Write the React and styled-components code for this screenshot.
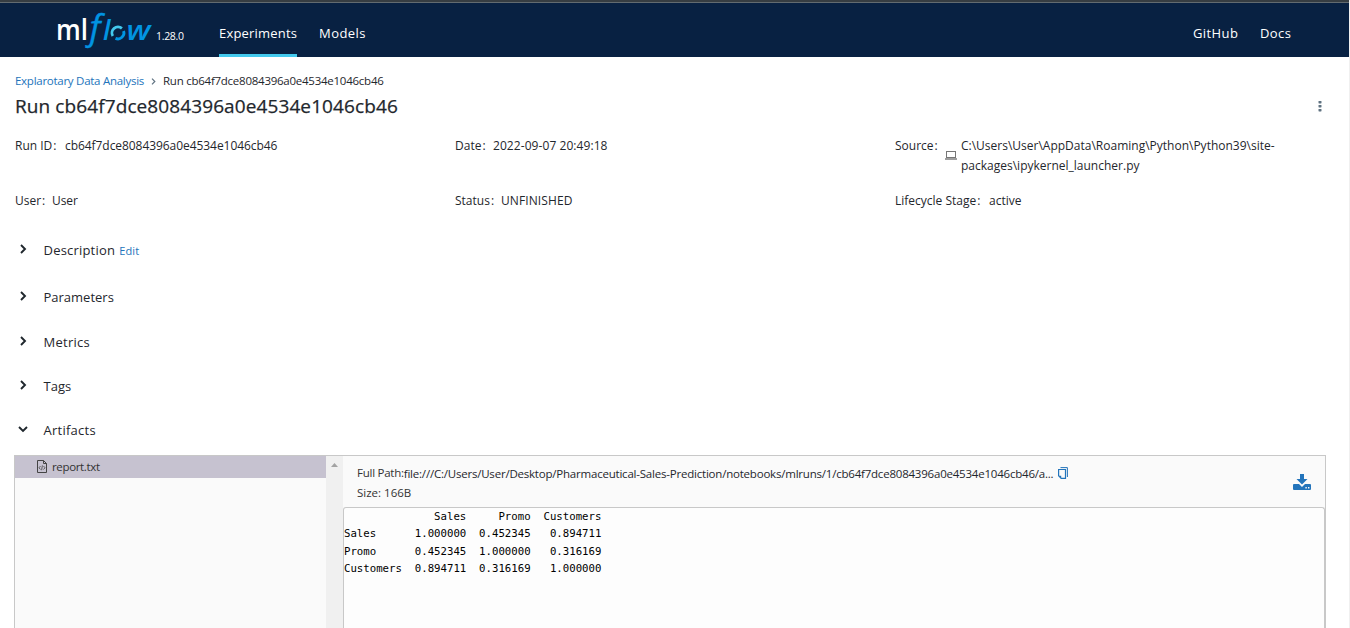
import React from 'react';
import styled, { createGlobalStyle } from 'styled-components';

const Global = createGlobalStyle`
  *{box-sizing:border-box}
  html,body{margin:0;padding:0;background:#fff;overflow:hidden}
  body{font-family:"Open Sans","Noto Sans",sans-serif;font-size:12px;color:#1f272d}
`;

const Page = styled.div`
  height: 628px;
  display: flex;
  flex-direction: column;
  border-right: 1px solid #f0f0f0;
  overflow: hidden;
`;
const BrowserEdge = styled.div`
  flex: none;
  height: 3px;
  margin-right: -1px;
  background: #363d42;
  border-bottom: 1px solid #626b70;
`;
const Header = styled.header`
  flex: none;
  height: 54px;
  display: flex;
  background: #082142;
  color: #fff;
  padding: 0 57px 0 56px;
`;
const Logo = styled.svg`
  width: 98px;
  height: 54px;
  flex: none;
`;
const Text = styled.span`
  font-size: ${p => p.$size || 12}px;
  font-weight: ${p => p.$weight || 400};
  letter-spacing: ${p => p.$track || 0}px;
  white-space: pre;
`;
const Version = styled.div`
  width: 65px;
  padding: 25px 0 0 2px;
  line-height: 16px;
`;
const NavLink = styled.a`
  height: 54px;
  padding-top: 20px;
  line-height: 20px;
  width: ${p => p.$width}px;
  margin-right: ${p => p.$gap || 0}px;
  border-bottom: 3px solid ${p => (p.$active ? '#43c9ed' : 'transparent')};
`;
const Spacer = styled.div`
  flex: 1;
`;
const Breadcrumb = styled.nav`
  display: flex;
  align-items: center;
  height: 18px;
  margin: 14px 0 0 15px;
`;
const Link = styled.a`
  color: #2374bb;
`;
const Separator = styled.svg`
  width: 5px;
  height: 7px;
  margin: 2px 7px 0;
`;
const TitleRow = styled.div`
  display: flex;
  align-items: center;
  justify-content: space-between;
  height: 30px;
  padding: 2px 26px 0 15px;
`;
const Title = styled.h1`
  margin: 0;
  font-weight: inherit;
  line-height: 30px;
  -webkit-text-stroke: 0.25px currentColor;
`;
const Dots = styled.svg`
  width: 6px;
  height: 12px;
  margin-top: 2px;
`;
const Meta = styled.dl`
  display: grid;
  grid-template-columns: 440px 440px 1fr;
  grid-template-rows: 55px 20px;
  margin: 17px 0 0 15px;
  line-height: 20px;
`;
const MetaItem = styled.div`
  display: flex;
  align-items: flex-start;
`;
const Term = styled.dt`
  flex: none;
  width: ${p => p.$width}px;
`;
const Colon = styled.span`
  margin-left: 1px;
`;
const Detail = styled.dd`
  margin: 0;
`;
const Laptop = styled.svg`
  width: 12px;
  height: 9px;
  margin: 15px 4px 0 0;
`;
const Section = styled.section`
  display: flex;
  align-items: center;
  height: 20px;
  margin: ${p => p.$top}px 0 0 17px;
`;
const Chevron = styled.svg`
  width: 12px;
  height: 12px;
  margin: ${p => (p.$open ? '-3px' : '-2px')} 14.5px 0 0;
  fill: none;
  stroke: #1f272d;
  stroke-width: 1.9;
`;
const EditLink = styled(Link)`
  margin-left: 4px;
`;
const Artifacts = styled.div`
  display: flex;
  flex: 1;
  margin: 15px 23px 0 14px;
  border: 1px solid #c8c8c8;
  border-bottom: 0;
  background: #fafafa;
`;
const Tree = styled.div`
  width: 311px;
  flex: none;
`;
const TreeItem = styled.div`
  display: flex;
  align-items: center;
  height: 22px;
  padding-left: 22px;
  background: #c6c2d0;
  color: #333;
  line-height: 18px;
`;
const FileIcon = styled.svg`
  width: 10px;
  height: 13px;
  margin: -1px 5px 0 0;
`;
const ScrollTrack = styled.div`
  width: 17px;
  flex: none;
  background: #f0f0f0;
  padding: 7px 0 0 5px;
`;
const Arrow = styled.svg`
  display: block;
  width: 7px;
  height: 4px;
`;
const Viewer = styled.div`
  flex: 1;
  display: flex;
  flex-direction: column;
`;
const FileInfo = styled.div`
  display: flex;
  justify-content: space-between;
  height: 51px;
  padding: 7px 14px 0 14px;
  color: #333;
`;
const PathLine = styled.div`
  display: flex;
  line-height: 19px;
`;
const PathValue = styled.span`
  color: #1f272d;
  padding-top: 1px;
`;
const CopyIcon = styled.svg`
  width: 10px;
  height: 12px;
  margin: 4px 0 0 5px;
`;
const SizeLine = styled.div`
  line-height: 19px;
`;
const Download = styled.svg`
  width: 18px;
  height: 16px;
  margin-top: 11px;
`;
const FileBody = styled.pre`
  flex: 1;
  margin: 0;
  border: 1px solid #c8c8c8;
  border-bottom: 0;
  border-radius: 3px 3px 0 0;
  background: #fdfdfd;
  color: #000;
  font: 10.7px/17.3px "DejaVu Sans Mono", monospace;
`;

const report = `              Sales     Promo  Customers
Sales      1.000000  0.452345   0.894711
Promo      0.452345  1.000000   0.316169
Customers  0.894711  0.316169   1.000000`;

function MlflowLogo() {
  return (
    <Logo viewBox="56 3 98 54" fontFamily="Open Sans">
      <text x="56" y="40" fontSize="28" fontWeight="600" fill="#fff" textLength="32" lengthAdjust="spacingAndGlyphs">ml</text>
      <g fill="#0194e2" fontStyle="italic" fontWeight="600">
        <text x="89.5" y="39.5" fontSize="35.5" fontWeight="500" stroke="#0194e2" strokeWidth=".4">f</text>
        <text x="103" y="40" fontSize="27">l</text>
        <text x="126.5" y="40" fontSize="27" textLength="24" lengthAdjust="spacingAndGlyphs">w</text>
      </g>
      <g fill="none" strokeWidth="2.8">
        <path d="M112.8 36A6 6 0 0 1 121.9 28.4" stroke="#43c9ed" />
        <path d="M123.6 31A6 6 0 0 1 115.5 38.4" stroke="#0194e2" />
      </g>
    </Logo>
  );
}

function MetaField({ label, width, track, valueTrack, children, icon }) {
  return (
    <MetaItem>
      <Term $width={width}><Text $track={track}>{label}<Colon>:</Colon></Text></Term>
      {icon}
      <Detail><Text $track={valueTrack}>{children}</Text></Detail>
    </MetaItem>
  );
}

function Group({ title, top, open, track, children }) {
  return (
    <Section $top={top}>
      <Chevron $open={open} viewBox="0 0 12 12">
        <path d={open ? 'M2 4L6 8L10 4' : 'M4 2L8 6L4 10'} />
      </Chevron>
      <Text $size={13} $track={track}>{title}</Text>
      {children}
    </Section>
  );
}

export default function App() {
  return (
    <Page>
      <Global />
      <BrowserEdge />
      <Header>
        <MlflowLogo />
        <Version><Text $size={10.5} $track={-0.3}>1.28.0</Text></Version>
        <NavLink $active $width={78} $gap={22}><Text $size={13} $weight={500} $track={0.2}>Experiments</Text></NavLink>
        <NavLink $width={48}><Text $size={13} $weight={500} $track={0.45}>Models</Text></NavLink>
        <Spacer />
        <NavLink $width={45} $gap={22}><Text $size={13} $weight={500} $track={0.4}>GitHub</Text></NavLink>
        <NavLink $width={32}><Text $size={13} $weight={500} $track={0.4}>Docs</Text></NavLink>
      </Header>
      <Breadcrumb>
        <Link><Text $size={11.5} $track={-0.27}>Explarotary Data Analysis</Text></Link>
        <Separator viewBox="0 0 5 7"><path d="M1 .7L3.8 3.5L1 6.3" fill="none" stroke="#5f7281" strokeWidth="1.2" /></Separator>
        <Text $size={11.5} $track={-0.25}>Run cb64f7dce8084396a0e4534e1046cb46</Text>
      </Breadcrumb>
      <TitleRow>
        <Title><Text $size={19} $weight={500} $track={0.1}>Run cb64f7dce8084396a0e4534e1046cb46</Text></Title>
        <Dots viewBox="0 0 6 12" fill="#5f7281">
          <rect x="1.5" y="1" width="3" height="2.4" rx=".6" />
          <rect x="1.5" y="5" width="3" height="2.4" rx=".6" />
          <rect x="1.5" y="9" width="3" height="2.4" rx=".6" />
        </Dots>
      </TitleRow>
      <Meta>
        <MetaField label="Run ID" width={50} valueTrack={-0.06}>cb64f7dce8084396a0e4534e1046cb46</MetaField>
        <MetaField label="Date" width={38} valueTrack={0.07}>2022-09-07 20:49:18</MetaField>
        <MetaField
          label="Source"
          width={50}
          icon={
            <Laptop viewBox="0 0 12 9">
              <rect x="1.5" y=".5" width="9" height="6" fill="none" stroke="#777" />
              <path d="M0 8H12" stroke="#888" strokeWidth="1.6" />
            </Laptop>
          }
        >
          {'C:\\Users\\User\\AppData\\Roaming\\Python\\Python39\\site-\npackages\\ipykernel_launcher.py'}
        </MetaField>
        <MetaField label="User" width={37} valueTrack={-0.1}>User</MetaField>
        <MetaField label="Status" width={46} valueTrack={0.1}>UNFINISHED</MetaField>
        <MetaField label="Lifecycle Stage" width={94}>active</MetaField>
      </Meta>
      <Group title="Description" top={29} track={0.2}>
        <EditLink><Text $size={11} $track={0.15}>Edit</Text></EditLink>
      </Group>
      <Group title="Parameters" top={27} />
      <Group title="Metrics" top={25} track={0.25} />
      <Group title="Tags" top={24} />
      <Group title="Artifacts" top={24} open track={0.25} />
      <Artifacts>
        <Tree>
          <TreeItem>
            <FileIcon viewBox="0 0 10 13" fill="none" stroke="#444">
              <path d="M.5 .5H6.5L9.5 3.5V12.5H.5ZM6.5 .5V3.5H9.5" />
              <path d="M3.5 6L2 7.8L3.5 9.5M6.5 6L8 7.8L6.5 9.5M5.4 5.4L4.6 10.2" strokeWidth=".8" />
            </FileIcon>
            <Text $size={11.5} $track={-0.35}>report.txt</Text>
          </TreeItem>
        </Tree>
        <ScrollTrack><Arrow viewBox="0 0 7 4"><path d="M0 4L3.5 0L7 4Z" fill="#a3a3a3" /></Arrow></ScrollTrack>
        <Viewer>
          <FileInfo>
            <div>
              <PathLine>
                <Text $size={11.5} $track={-0.25}>Full Path:</Text>
                <PathValue><Text $size={11.5} $track={-0.21}>file:///C:/Users/User/Desktop/Pharmaceutical-Sales-Prediction/notebooks/mlruns/1/cb64f7dce8084396a0e4534e1046cb46/a...</Text></PathValue>
                <CopyIcon viewBox="0 0 10 12" fill="none" stroke="#2374bb">
                  <path d="M2.5 .6H9.4V10" />
                  <path d="M.6 2.5H7.5V11.4H3.2L.6 8.8Z" strokeWidth="1.2" />
                  <path d="M.6 8.8H3.2V11.4Z" fill="#2374bb" stroke="none" />
                </CopyIcon>
              </PathLine>
              <SizeLine><Text $size={11.5}>Size: 166B</Text></SizeLine>
            </div>
            <Download viewBox="0 0 18 16" fill="#2374bb">
              <path d="M7 0H11V5H14.5L9 10.5L3.5 5H7Z" />
              <path fillRule="evenodd" d="M1 10H6L9 13L12 10H17Q18 10 18 11V15Q18 16 17 16H1Q0 16 0 15V11Q0 10 1 10ZM12.4 13V14.4H13.8V13ZM15 13V14.4H16.4V13Z" />
            </Download>
          </FileInfo>
          <FileBody>{report}</FileBody>
        </Viewer>
      </Artifacts>
    </Page>
  );
}
